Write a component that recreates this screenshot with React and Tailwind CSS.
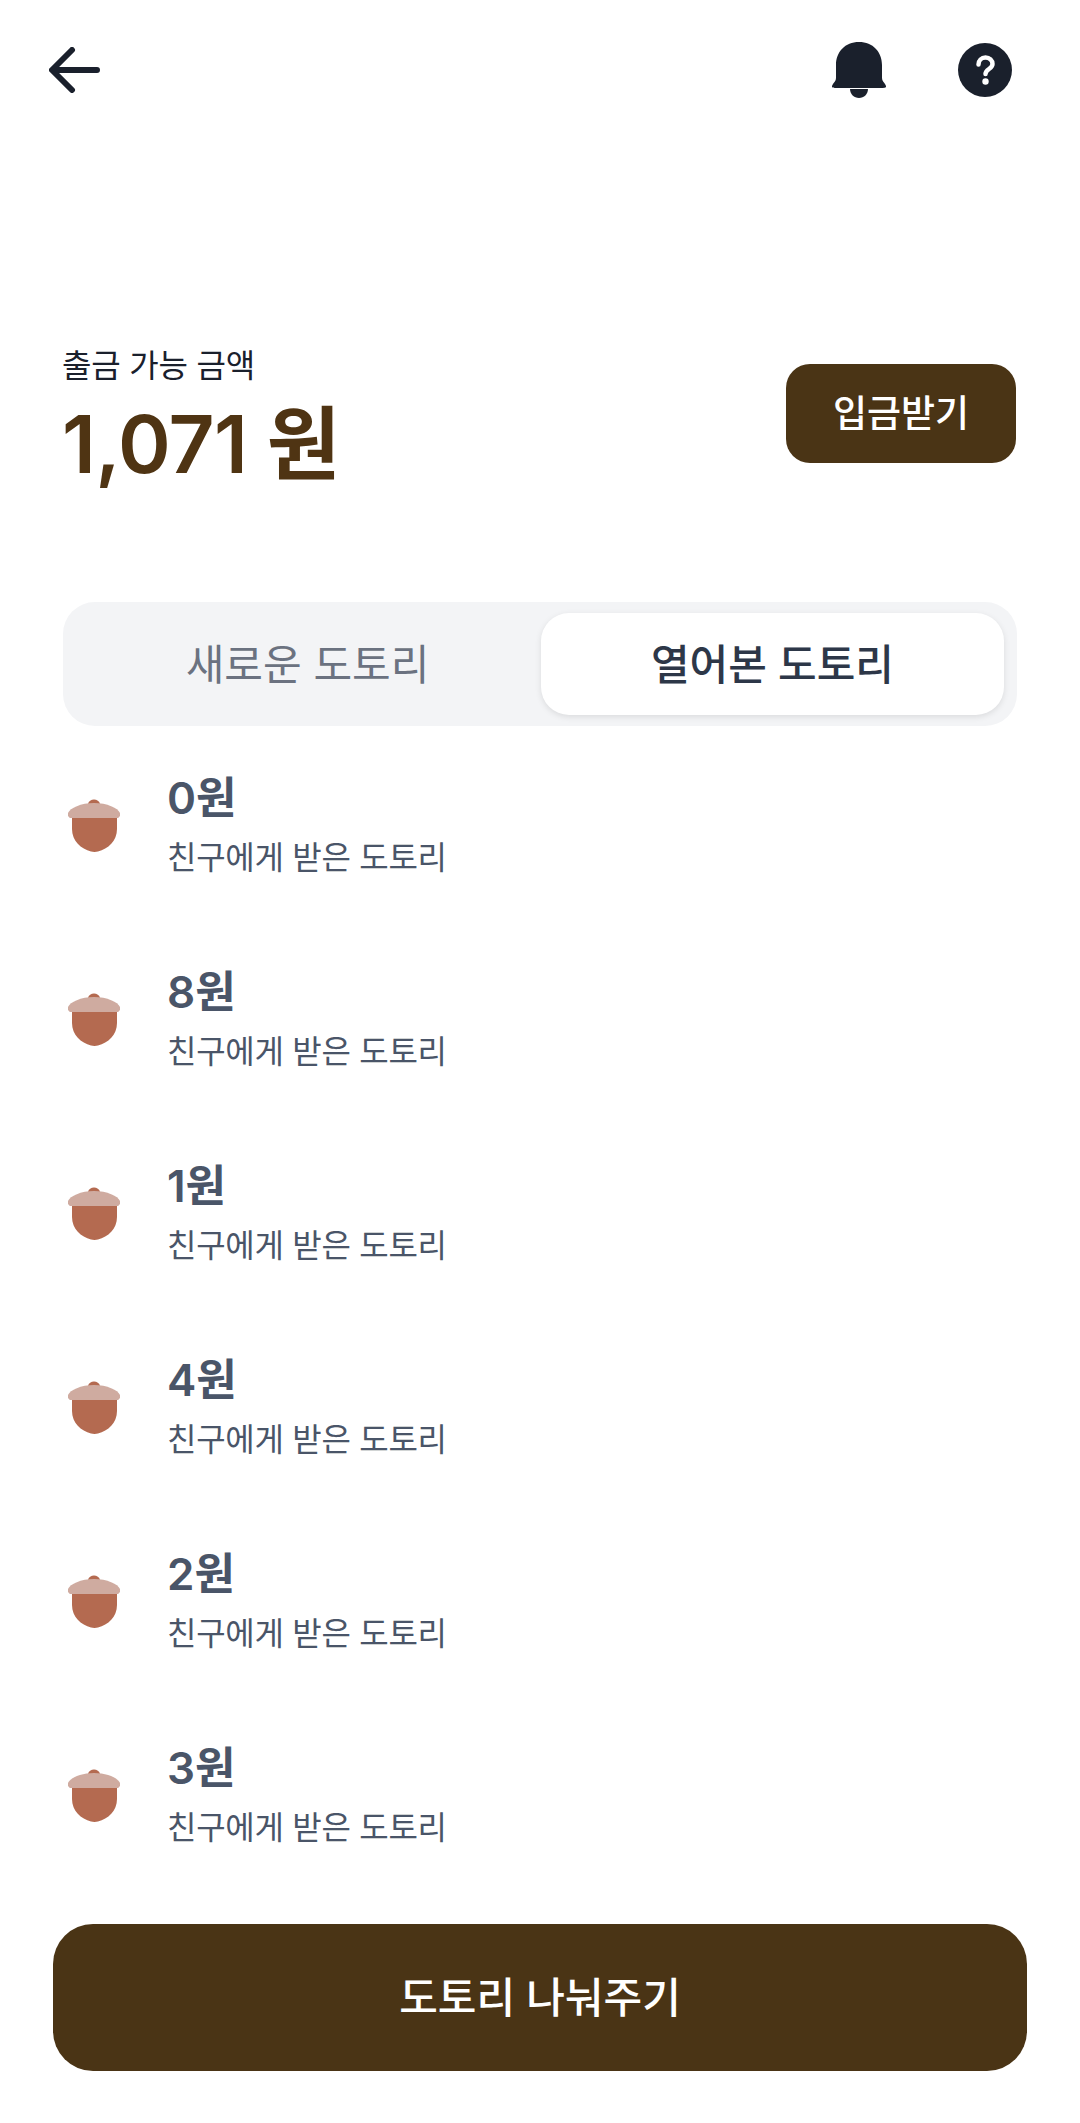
const FONT = 'font-["Inter","Noto_Sans_CJK_KR",sans-serif]';

const items = ['0원', '8원', '1원', '4원', '2원', '3원'];

function Acorn() {
  return (
    <svg width="52" height="53" viewBox="0 0 52 53" className="shrink-0">
      <path d="M20 5c1-6 11-6 12 0z" fill="#b46a50" />
      <path d="M4 16h45v14c0 12-9 20-19 22.500-2 .6-5 .6-7 0C13 50 4 42 4 30z" fill="#b46a50" />
      <path d="M0 14c2-5 13-10 26-10s24 5 26 10c.5 3-1 5-3 5H3c-2 0-3.500-2-3-5z" fill="#cfaba0" />
    </svg>
  );
}

function AcornRow({ title }) {
  return (
    <div className="flex items-center h-[194px] gap-[47px] pl-[5px]">
      <Acorn />
      <div className="flex flex-col">
        <span className="text-[44px] leading-[60px] font-semibold text-[#4a5568]">{title}</span>
        <span className="text-[32px] leading-[48px] tracking-[-0.3px] text-[#4a5568] mt-[6px]">친구에게 받은 도토리</span>
      </div>
    </div>
  );
}

export default function App() {
  return (
    <div className={`${FONT} w-[1080px] h-[2123px] bg-white flex flex-col`}>
      <div className="flex items-center justify-between h-[140px] pl-[49px] pr-[68px]">
        <svg width="51" height="46" viewBox="0 0 51 46" fill="none" stroke="#1a202c" strokeWidth="6" strokeLinecap="round" strokeLinejoin="round">
          <path d="M23 3 3 23l20 20M4 23h44" />
        </svg>
        <div className="flex items-center gap-[72px]">
          <svg width="54" height="56" viewBox="0 0 54 56" fill="#1a202c">
            <path d="M27 0C13 0 4 10 4 23v13c0 3-2 4-3 6-2 3-1 4 2 4h48c3 0 4-1 2-4-1-2-3-3-3-6V23C50 10 41 0 27 0z" />
            <path d="M18 47h18c0 5-4 9-9 9s-9-4-9-9z" />
          </svg>
          <svg width="54" height="54" viewBox="0 0 54 54">
            <circle cx="27" cy="27" r="27" fill="#1a202c" />
            <path d="M20.500 21.500c0-4 3-7 7-7s7 3 7 6.500c0 5-7 5-7 10" fill="none" stroke="#fff" strokeWidth="4.500" strokeLinecap="round" />
            <circle cx="27.500" cy="38.500" r="3.200" fill="#fff" />
          </svg>
        </div>
      </div>

      <div className="flex items-start justify-between pl-[62px] pr-[64px] mt-[202px]">
        <div className="flex flex-col">
          <span className="text-[32px] leading-[48px] tracking-[-0.2px] text-[#1a202c]">출금 가능 금액</span>
          <span className="text-[80px] leading-[100px] font-semibold text-[#4f3413] tracking-[-0.6px] mt-[4px]">1,071 원</span>
        </div>
        <button className="mt-[22px] w-[230px] h-[99px] rounded-[24px] bg-[#4a3415] text-white text-[37px] font-medium">입금받기</button>
      </div>

      <div className="mx-[63px] mt-[108px] h-[124px] rounded-[32px] bg-[#f3f4f6] pl-[11px] pr-[13px] py-[11px] flex">
        <div className="flex-1 flex items-center justify-center text-[42px] text-[#6b7280]">새로운 도토리</div>
        <div className="w-[463px] flex items-center justify-center text-[42px] font-medium text-[#2d3748] bg-white rounded-[28px] shadow-[0_2px_6px_rgba(0,0,0,0.1)]">열어본 도토리</div>
      </div>

      <div className="flex flex-col mt-[2px] pl-[63px]">
        {items.map((t, i) => (
          <AcornRow key={i} title={t} />
        ))}
      </div>

      <button className="mx-[53px] mt-auto mb-[52px] h-[147px] rounded-[40px] bg-[#4a3415] text-white text-[42px] font-medium">도토리 나눠주기</button>
    </div>
  );
}
